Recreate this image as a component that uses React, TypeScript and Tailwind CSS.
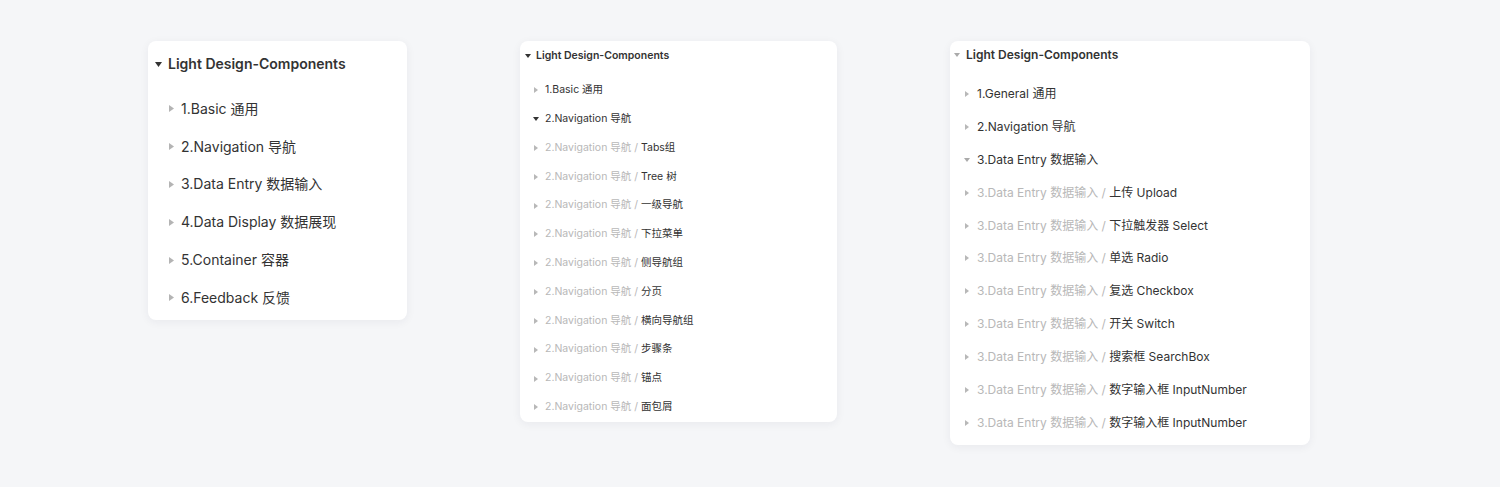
import React from "react";

type Item = { prefix?: string; label: string; open?: boolean };

const FONT = { fontFamily: '"Inter", "Noto Sans CJK SC", sans-serif' };

function Tri({ dir, w, h, color }: { dir: "down" | "right"; w: number; h: number; color: string }) {
  if (dir === "down") {
    return (
      <svg width={w} height={h} viewBox={`0 0 ${w} ${h}`}>
        <polygon points={`0,0 ${w},0 ${w / 2},${h}`} fill={color} />
      </svg>
    );
  }
  return (
    <svg width={w} height={h} viewBox={`0 0 ${w} ${h}`}>
      <polygon points={`0,0 ${w},${h / 2} 0,${h}`} fill={color} />
    </svg>
  );
}

const card1: Item[] = [
  { label: "1.Basic 通用" },
  { label: "2.Navigation 导航" },
  { label: "3.Data Entry 数据输入" },
  { label: "4.Data Display 数据展现" },
  { label: "5.Container 容器" },
  { label: "6.Feedback 反馈" },
];

const nav = "2.Navigation 导航 / ";
const card2: Item[] = [
  { label: "1.Basic 通用" },
  { label: "2.Navigation 导航", open: true },
  { prefix: nav, label: "Tabs组" },
  { prefix: nav, label: "Tree 树" },
  { prefix: nav, label: "一级导航" },
  { prefix: nav, label: "下拉菜单" },
  { prefix: nav, label: "侧导航组" },
  { prefix: nav, label: "分页" },
  { prefix: nav, label: "横向导航组" },
  { prefix: nav, label: "步骤条" },
  { prefix: nav, label: "锚点" },
  { prefix: nav, label: "面包屑" },
];

const de = "3.Data Entry 数据输入 / ";
const card3: Item[] = [
  { label: "1.General 通用" },
  { label: "2.Navigation 导航" },
  { label: "3.Data Entry 数据输入", open: true },
  { prefix: de, label: "上传 Upload" },
  { prefix: de, label: "下拉触发器 Select" },
  { prefix: de, label: "单选 Radio" },
  { prefix: de, label: "复选 Checkbox" },
  { prefix: de, label: "开关 Switch" },
  { prefix: de, label: "搜索框 SearchBox" },
  { prefix: de, label: "数字输入框 InputNumber" },
  { prefix: de, label: "数字输入框 InputNumber" },
];

export default function App() {
  return (
    <div className="w-[1500px] h-[487px] bg-[#f5f6f8] flex items-start pt-[41px]" style={FONT}>
      {/* Card 1 */}
      <div className="ml-[148px] w-[259px] h-[279px] bg-white rounded-[8px] shadow-[0_2px_10px_rgba(30,40,60,0.06)] pt-[11px]">
        <div className="h-[24px] flex items-center pl-[5px] gap-[5px]">
          <div className="w-[10px] flex justify-center">
            <Tri dir="down" w={7} h={5} color="#333333" />
          </div>
          <span className="text-[14px] font-semibold text-[#333333] leading-none">Light Design-Components</span>
        </div>
        <div className="mt-[14px]">
          {card1.map((it, i) => (
            <div key={i} className="h-[37.8px] flex items-center pl-[18px] gap-[5px]">
              <div className="w-[10px] flex justify-center">
                <Tri dir="right" w={5} h={7} color="#b4b4b4" />
              </div>
              <span className="text-[14px] text-[#333333] leading-none">{it.label}</span>
            </div>
          ))}
        </div>
      </div>

      {/* Card 2 */}
      <div className="ml-[113px] w-[317px] h-[381px] bg-white rounded-[8px] shadow-[0_2px_10px_rgba(30,40,60,0.06)] pt-[5px]">
        <div className="h-[20px] flex items-center pl-[3px] gap-[3px]">
          <div className="w-[10px] flex justify-center">
            <Tri dir="down" w={6} h={4} color="#333333" />
          </div>
          <span className="text-[10.5px] font-semibold text-[#333333] leading-none">Light Design-Components</span>
        </div>
        <div className="mt-[10px]">
          {card2.map((it, i) => (
            <div key={i} className="h-[28.82px] flex items-center pl-[11px] gap-[4px]">
              <div className="w-[10px] flex justify-center">
                {it.open ? (
                  <Tri dir="down" w={6} h={4} color="#333333" />
                ) : (
                  <Tri dir="right" w={4} h={6} color="#b8b8b8" />
                )}
              </div>
              <span className="text-[10.5px] leading-none whitespace-pre">
                {it.prefix && <span className="text-[#b8b8b8]">{it.prefix}</span>}
                <span className="text-[#333333]">{it.label}</span>
              </span>
            </div>
          ))}
        </div>
      </div>

      {/* Card 3 */}
      <div className="ml-[113px] w-[360px] h-[404px] bg-white rounded-[8px] shadow-[0_2px_10px_rgba(30,40,60,0.06)] pt-[3px]">
        <div className="h-[22px] flex items-center pl-[2px] gap-[4px]">
          <div className="w-[10px] flex justify-center">
            <Tri dir="down" w={6} h={4} color="#aaaaaa" />
          </div>
          <span className="text-[12px] font-semibold text-[#333333] leading-none">Light Design-Components</span>
        </div>
        <div className="mt-[11.5px]">
          {card3.map((it, i) => (
            <div key={i} className="h-[32.9px] flex items-center pl-[12px] gap-[5px]">
              <div className="w-[10px] flex justify-center">
                {it.open ? (
                  <Tri dir="down" w={6} h={4} color="#aaaaaa" />
                ) : (
                  <Tri dir="right" w={4} h={6} color="#b8b8b8" />
                )}
              </div>
              <span className="text-[12px] leading-none whitespace-pre">
                {it.prefix && <span className="text-[#b8b8b8]">{it.prefix}</span>}
                <span className="text-[#333333]">{it.label}</span>
              </span>
            </div>
          ))}
        </div>
      </div>
    </div>
  );
}
